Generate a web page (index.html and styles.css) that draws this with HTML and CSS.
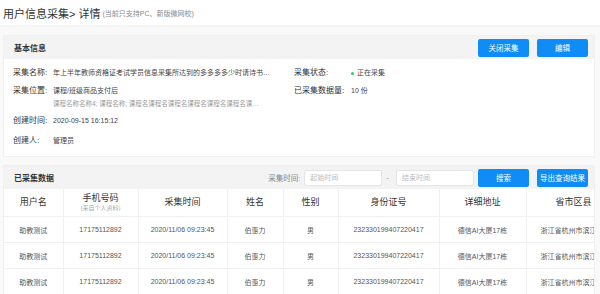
FILE: index.html
```html
<!DOCTYPE html>
<html>
<head>
    <title>用户信息采集 - 详情</title>
    <link rel="stylesheet" href="styles.css">
</head>
<body>
    <div class="top">
        <span class="title">用户信息采集&gt; 详情</span>
        <span class="tip">(当前只支持PC、新版微网校)</span>
    </div>
    <div class="card">
        <div class="card-head">
            <span class="head-title">基本信息</span>
            <div class="actions">
                <button class="btn">关闭采集</button>
                <button class="btn">编辑</button>
            </div>
        </div>
        <div class="info">
            <div class="info-col left">
                <div class="row">
                    <span class="label">采集名称:</span>
                    <span class="value">年上半年教师资格证考试学员信息采集所达到的多多多多少时请诗书…</span>
                </div>
                <div class="row">
                    <span class="label">采集位置:</span>
                    <div class="value">
                        <div>课程/班级商品支付后</div>
                        <div class="sub">课程名称名称4; 课程名称; 课程名课程名课程名课程名课程名课程名课…</div>
                    </div>
                </div>
                <div class="row">
                    <span class="label">创建时间:</span>
                    <span class="value">2020-09-15 16:15:12</span>
                </div>
                <div class="row">
                    <span class="label">创建人:</span>
                    <span class="value">管理员</span>
                </div>
            </div>
            <div class="info-col right">
                <div class="row">
                    <span class="label">采集状态:</span>
                    <span class="value"><i class="dot"></i>正在采集</span>
                </div>
                <div class="row">
                    <span class="label">已采集数据量:</span>
                    <span class="value">10 份</span>
                </div>
            </div>
        </div>
    </div>
    <div class="card data">
        <div class="card-head">
            <span class="head-title">已采集数据</span>
            <div class="actions">
                <span class="filter-label">采集时间:</span>
                <input class="date" placeholder="起始时间">
                <span class="dash">-</span>
                <input class="date" placeholder="结束时间">
                <button class="btn first">搜索</button>
                <button class="btn">导出查询结果</button>
            </div>
        </div>
        <table class="grid">
            <colgroup>
                <col style="width:59px">
                <col style="width:75px">
                <col style="width:89px">
                <col style="width:56px">
                <col style="width:55px">
                <col style="width:101px">
                <col style="width:87px">
                <col style="width:95px">
            </colgroup>
            <thead>
                <tr>
                    <th>用户名</th>
                    <th>手机号码<div class="th-sub">(来自个人资料)</div></th>
                    <th>采集时间</th>
                    <th>姓名</th>
                    <th>性别</th>
                    <th>身份证号</th>
                    <th>详细地址</th>
                    <th>省市区县</th>
                </tr>
            </thead>
            <tbody>
                <tr>
                    <td>助教测试</td><td>17175112892</td><td>2020/11/06 09:23:45</td><td>伯惠力</td>
                    <td>男</td><td>232330199407220417</td><td>德信AI大厦17栋</td><td class="clip">浙江省杭州市滨江区</td>
                </tr>
                <tr>
                    <td>助教测试</td><td>17175112892</td><td>2020/11/06 09:23:45</td><td>伯惠力</td>
                    <td>男</td><td>232330199407220417</td><td>德信AI大厦17栋</td><td class="clip">浙江省杭州市滨江区</td>
                </tr>
                <tr>
                    <td>助教测试</td><td>17175112892</td><td>2020/11/06 09:23:45</td><td>伯惠力</td>
                    <td>男</td><td>232330199407220417</td><td>德信AI大厦17栋</td><td class="clip">浙江省杭州市滨江区</td>
                </tr>
            </tbody>
        </table>
    </div>
</body>
</html>
```

FILE: styles.css
```css
body {
    margin: 0;
    background-color: #f9f9f9;
    font-family: "Liberation Sans", "Noto Sans CJK SC", sans-serif;
    color: #333;
    overflow: hidden;
}
.top {
    height: 25px;
    background-color: #fff;
    padding-left: 3px;
    border-bottom: 2px solid #f4f4f4;
    display: flex;
    align-items: center;
    gap: 2px;
}
.title {
    font-size: 11px;
    color: #333;
}
.tip {
    font-size: 7px;
    color: #888;
}
.card {
    margin: 8px 5px 0 3px;
    background-color: #fff;
    border: 1px solid #f0f0f0;
    overflow: hidden;
}
.card-head {
    height: 23px;
    background-color: #f3f3f3;
    display: flex;
    align-items: center;
    justify-content: space-between;
    padding: 0 6px 0 10px;
}
.head-title {
    font-size: 8px;
    font-weight: bold;
    color: #333;
}
.actions {
    display: flex;
    align-items: center;
}
.btn {
    width: 51px;
    height: 18px;
    margin-left: 8px;
    border: none;
    border-radius: 2px;
    background-color: #0f8cf6;
    color: #fff;
    font-family: inherit;
    font-size: 7.5px;
    padding: 0;
}
.btn.first {
    margin-left: 4px;
}
.filter-label {
    font-size: 7.5px;
    color: #888;
    margin-right: 4px;
}
.date {
    width: 78px;
    height: 16px;
    box-sizing: border-box;
    border: 1px solid #e4e4e4;
    border-radius: 2px;
    padding: 0 5px;
    font-family: inherit;
    font-size: 7px;
    color: #555;
    background: #fff;
}
.date::placeholder {
    color: #bbb;
}
.dash {
    font-size: 8px;
    color: #999;
    margin: 0 7px 0 4px;
}
.info {
    display: flex;
    padding: 8px 0 3px 9px;
}
.info-col.left {
    width: 281px;
}
.info-col.right {
    flex: 1;
}
.row {
    display: flex;
    align-items: flex-start;
    font-size: 8px;
    line-height: 12px;
    margin: 0 0 6px;
}
.row:nth-child(3) {
    margin-bottom: 8px;
}
.row .label {
    width: 40px;
    flex-shrink: 0;
    color: #333;
}
.right .row .label {
    width: 57px;
}
.row .value {
    color: #444;
    font-size: 7px;
    white-space: nowrap;
    overflow: hidden;
    text-overflow: ellipsis;
}
.row .sub {
    color: #999;
    font-size: 6.5px;
    line-height: 10px;
    margin-top: 2px;
}
.dot {
    display: inline-block;
    width: 3px;
    height: 3px;
    border-radius: 50%;
    background-color: #1ed760;
    margin-right: 3px;
    vertical-align: middle;
}
.grid {
    border-collapse: collapse;
    table-layout: fixed;
    width: 617px;
}
.grid th {
    height: 27px;
    padding: 0;
    font-size: 9px;
    font-weight: normal;
    color: #333;
    border-right: 1px solid #f0f0f0;
    border-bottom: 1px solid #f0f0f0;
    line-height: 11px;
}
.th-sub {
    font-size: 6px;
    color: #aaa;
    line-height: 8px;
}
.grid td {
    height: 25px;
    padding: 0;
    font-size: 7px;
    color: #555;
    text-align: center;
    border-right: 1px solid #f0f0f0;
    border-bottom: 1px solid #f0f0f0;
    white-space: nowrap;
    overflow: hidden;
}
.grid td.clip {
    text-align: left;
    padding-left: 14px;
}
```
